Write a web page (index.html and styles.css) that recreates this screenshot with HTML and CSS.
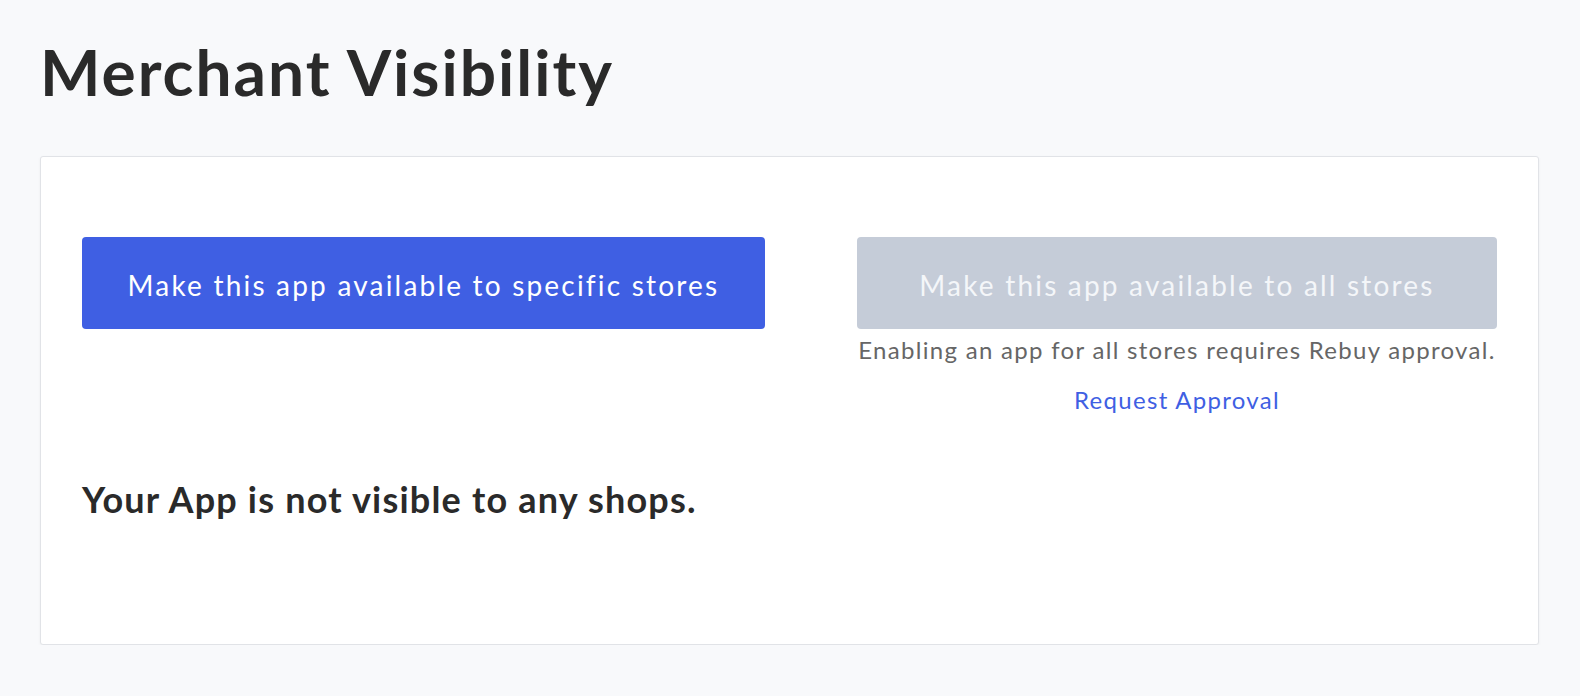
FILE: index.html
```html
<!DOCTYPE html>
<html>
<head>
<meta charset="utf-8">
<link rel="stylesheet" href="styles.css">
</head>
<body>
<div class="page">
  <h1 class="title">Merchant Visibility</h1>
  <div class="card">
    <div class="actions">
      <button class="btn btn-primary">Make this app available to specific stores</button>
      <div class="all-stores">
        <button class="btn btn-disabled">Make this app available to all stores</button>
        <p class="note">Enabling an app for all stores requires Rebuy approval.</p>
        <a class="link" href="#">Request Approval</a>
      </div>
    </div>
    <p class="status">Your App is not visible to any shops.</p>
  </div>
</div>
</body>
</html>
```
FILE: styles.css
```css
html, body {
  margin: 0;
  padding: 0;
  background: #f8f9fb;
  font-family: Lato, "Open Sans", sans-serif;
  color: #2a2a2a;
}
.page {
  padding: 0 41px 0 40px;
}
.title {
  margin: 0;
  padding-top: 36px;
  height: 120px;
  box-sizing: border-box;
  font-size: 64px;
  line-height: 72px;
  font-weight: 700;
  color: #2a2a2a;
  letter-spacing: 2px;
}
.card {
  margin-top: 36px;
  background: #fff;
  border: 1px solid #e1e3e7;
  border-radius: 3px;
  box-shadow: 0 1px 3px rgba(0,0,0,0.05);
  height: 489px;
  box-sizing: border-box;
  padding: 80px 41px 0 41px;
}
.actions {
  display: flex;
  justify-content: space-between;
  align-items: flex-start;
}
.btn {
  border: none;
  border-radius: 4px;
  height: 92px;
  font-family: inherit;
  font-size: 28px;
  letter-spacing: 2.2px;
  color: #fff;
  padding: 4px 0 0;
}
.btn-primary {
  width: 683px;
  background: #3f5fe3;
}
.btn-disabled {
  width: 640px;
  background: #c5ccd8;
  color: #f4f6f9;
}
.all-stores {
  width: 640px;
  display: flex;
  flex-direction: column;
  align-items: center;
}
.note {
  margin: 6px 0 0;
  font-size: 24px;
  line-height: 30px;
  letter-spacing: 1.3px;
  color: #666;
  white-space: nowrap;
}
.link {
  margin-top: 20px;
  font-size: 24px;
  line-height: 30px;
  letter-spacing: 1.3px;
  color: #3f5fe3;
  text-decoration: none;
}
.status {
  margin: 62px 0 0;
  font-size: 36px;
  line-height: 44px;
  letter-spacing: 1.2px;
  font-weight: 700;
  color: #2a2a2a;
}
```
